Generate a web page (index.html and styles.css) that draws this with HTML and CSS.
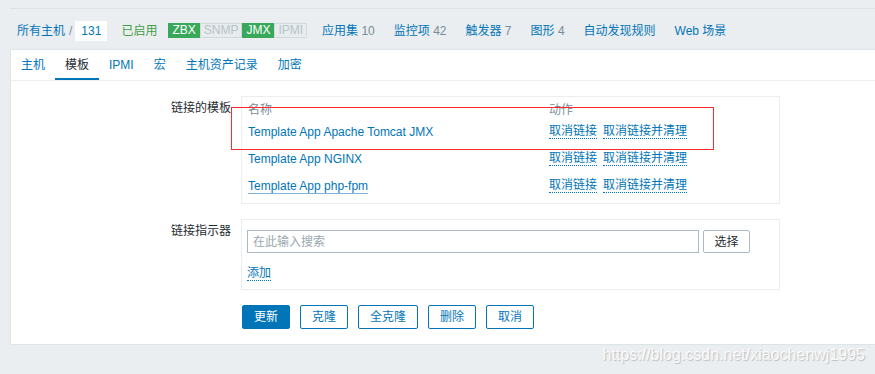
FILE: index.html
```html
<!DOCTYPE html>
<html lang="zh-CN">
<head>
    <meta charset="UTF-8">
    <meta name="viewport" content="width=device-width, initial-scale=1.0">
    <title>主机 - 模板</title>
    <link rel="stylesheet" href="styles.css">
</head>
<body>
    <div class="page">
        <div class="host-nav">
            <a class="link" href="#">所有主机</a>
            <span class="sep">/</span>
            <span class="host-box"><a class="link" href="#">131</a></span>
            <span class="enabled">已启用</span>
            <span class="badges">
                <span class="badge on">ZBX</span><span class="badge off">SNMP</span><span class="badge on">JMX</span><span class="badge off">IPMI</span>
            </span>
            <a class="nav-item first" href="#">应用集 <span class="count">10</span></a>
            <a class="nav-item" href="#">监控项 <span class="count">42</span></a>
            <a class="nav-item" href="#">触发器 <span class="count">7</span></a>
            <a class="nav-item" href="#">图形 <span class="count">4</span></a>
            <a class="nav-item" href="#">自动发现规则</a>
            <a class="nav-item" href="#">Web 场景</a>
        </div>

        <div class="panel">
            <ul class="tabs">
                <li><a href="#">主机</a></li>
                <li class="active"><a href="#">模板</a></li>
                <li><a href="#">IPMI</a></li>
                <li><a href="#">宏</a></li>
                <li><a href="#">主机资产记录</a></li>
                <li><a href="#">加密</a></li>
            </ul>

            <div class="form">
                <div class="form-row">
                    <label class="form-label">链接的模板</label>
                    <div class="field-box linked">
                        <div class="lt-head">
                            <div class="lt-name">名称</div>
                            <div>动作</div>
                        </div>
                        <div class="lt-row">
                            <div class="lt-name"><a class="link" href="#">Template App Apache Tomcat JMX</a></div>
                            <div class="lt-actions">
                                <a class="dotted" href="#">取消链接</a>
                                <a class="dotted" href="#">取消链接并清理</a>
                            </div>
                        </div>
                        <div class="lt-row">
                            <div class="lt-name"><a class="link" href="#">Template App NGINX</a></div>
                            <div class="lt-actions">
                                <a class="dotted" href="#">取消链接</a>
                                <a class="dotted" href="#">取消链接并清理</a>
                            </div>
                        </div>
                        <div class="lt-row">
                            <div class="lt-name"><a class="link hover" href="#">Template App php-fpm</a></div>
                            <div class="lt-actions">
                                <a class="dotted" href="#">取消链接</a>
                                <a class="dotted" href="#">取消链接并清理</a>
                            </div>
                        </div>
                        <div class="mark"></div>
                    </div>
                </div>

                <div class="form-row">
                    <label class="form-label">链接指示器</label>
                    <div class="field-box indicator">
                        <div class="search-row">
                            <input class="search" type="text" placeholder="在此输入搜索">
                            <button class="btn-grey">选择</button>
                        </div>
                        <div class="add-row"><a class="dotted" href="#">添加</a></div>
                    </div>
                </div>

                <div class="buttons">
                    <button class="btn primary">更新</button>
                    <button class="btn">克隆</button>
                    <button class="btn">全克隆</button>
                    <button class="btn">删除</button>
                    <button class="btn">取消</button>
                </div>
            </div>
        </div>
    </div>

    <div class="watermark">https://blog.csdn.net/xiaochenwj1995</div>
</body>
</html>
```

FILE: styles.css
```css
body {
    margin: 0;
    background: #ebeef0;
    font-family: "Liberation Sans", Arial, "Noto Sans CJK SC", sans-serif;
    font-size: 12px;
    line-height: 14px;
    color: #1f2c33;
}

a {
    text-decoration: none;
}

.page {
    padding: 8px 0 0 10px;
}

.host-nav {
    border-top: 1px solid #dde2e5;
    height: 37px;
    padding-top: 3px;
    display: flex;
    align-items: center;
    padding-left: 7px;
}

.link {
    color: #0275b8;
}

.link.hover {
    border-bottom: 1px solid #7fb3d9;
}

.sep {
    color: #768d99;
    margin: 0 3px 0 4px;
}

.host-box {
    background: #fff;
    height: 20px;
    line-height: 20px;
    padding: 0 6px;
}

.enabled {
    color: #429e47;
    margin-left: 14px;
}

.badges {
    display: flex;
    margin-left: 11px;
}

.badge {
    height: 15px;
    line-height: 15px;
    padding: 0 4px;
    box-sizing: border-box;
}

.badge.on {
    background: #38a95b;
    color: #fff;
}

.badge.off {
    background: #e8ecee;
    color: #b7c3c9;
    border: 1px solid #d3dadd;
    line-height: 13px;
    padding: 0 3px;
}

.nav-item {
    color: #0275b8;
    margin-left: 19px;
}

.nav-item.first {
    margin-left: 15px;
}

.count {
    color: #768d99;
}

.panel {
    background: #fff;
    border: 1px solid #dfe4e7;
    border-right: 0;
    padding-bottom: 15px;
}

.tabs {
    list-style: none;
    margin: 0;
    padding: 0;
    display: flex;
    height: 30px;
    border-bottom: 1px solid #ebeef0;
}

.tabs li a {
    display: block;
    padding: 0 10px;
    line-height: 30px;
    color: #0275b8;
}

.tabs li.active a {
    color: #1f2c33;
    box-shadow: inset 0 -2px #0275b8;
}

.form {
    padding-top: 15px;
}

.form-row {
    display: flex;
    gap: 10px;
    margin-bottom: 15px;
}

.form-label {
    width: 220px;
    text-align: right;
    padding-top: 5px;
}

.field-box {
    width: 539px;
    box-sizing: border-box;
    border: 1px solid #ebeef0;
}

.linked {
    position: relative;
    padding: 5px 6px 4px;
}

.lt-head {
    display: flex;
    height: 16px;
    line-height: 16px;
    color: #768d99;
}

.lt-row {
    display: flex;
    align-items: center;
    height: 27px;
}

.lt-name {
    width: 301px;
}

.lt-actions {
    display: flex;
    gap: 6px;
}

.dotted {
    color: #0275b8;
    border-bottom: 1px dotted #0275b8;
}

.mark {
    position: absolute;
    left: -11px;
    top: 10px;
    width: 483px;
    height: 43px;
    box-sizing: border-box;
    border: 1px solid #ff2a2a;
}

.indicator {
    padding: 10px 5px 9px;
}

.search-row {
    display: flex;
    gap: 4px;
}

.search {
    width: 452px;
    height: 23px;
    box-sizing: border-box;
    border: 1px solid #acbbc2;
    padding: 0 5px;
    font: inherit;
    color: #1f2c33;
    outline: none;
}

.search::placeholder {
    color: #9aa8af;
}

.btn-grey {
    width: 47px;
    height: 23px;
    border: 1px solid #acbbc2;
    border-radius: 2px;
    background: #fff;
    font: inherit;
    color: #1f2c33;
    padding: 0;
}

.add-row {
    margin-top: 13px;
}

.buttons {
    display: flex;
    gap: 10px;
    margin-left: 231px;
}

.btn {
    height: 24px;
    padding: 0 11px;
    border: 1px solid #0275b8;
    border-radius: 2px;
    background: #fff;
    color: #0275b8;
    font: inherit;
}

.btn.primary {
    background: #0275b8;
    color: #fff;
}

.watermark {
    position: absolute;
    top: 346px;
    right: 10px;
    font-size: 16px;
    line-height: 18px;
    color: rgba(255, 255, 255, 0.85);
    text-shadow: 1px 1px 1px rgba(0, 0, 0, 0.2);
}
```
